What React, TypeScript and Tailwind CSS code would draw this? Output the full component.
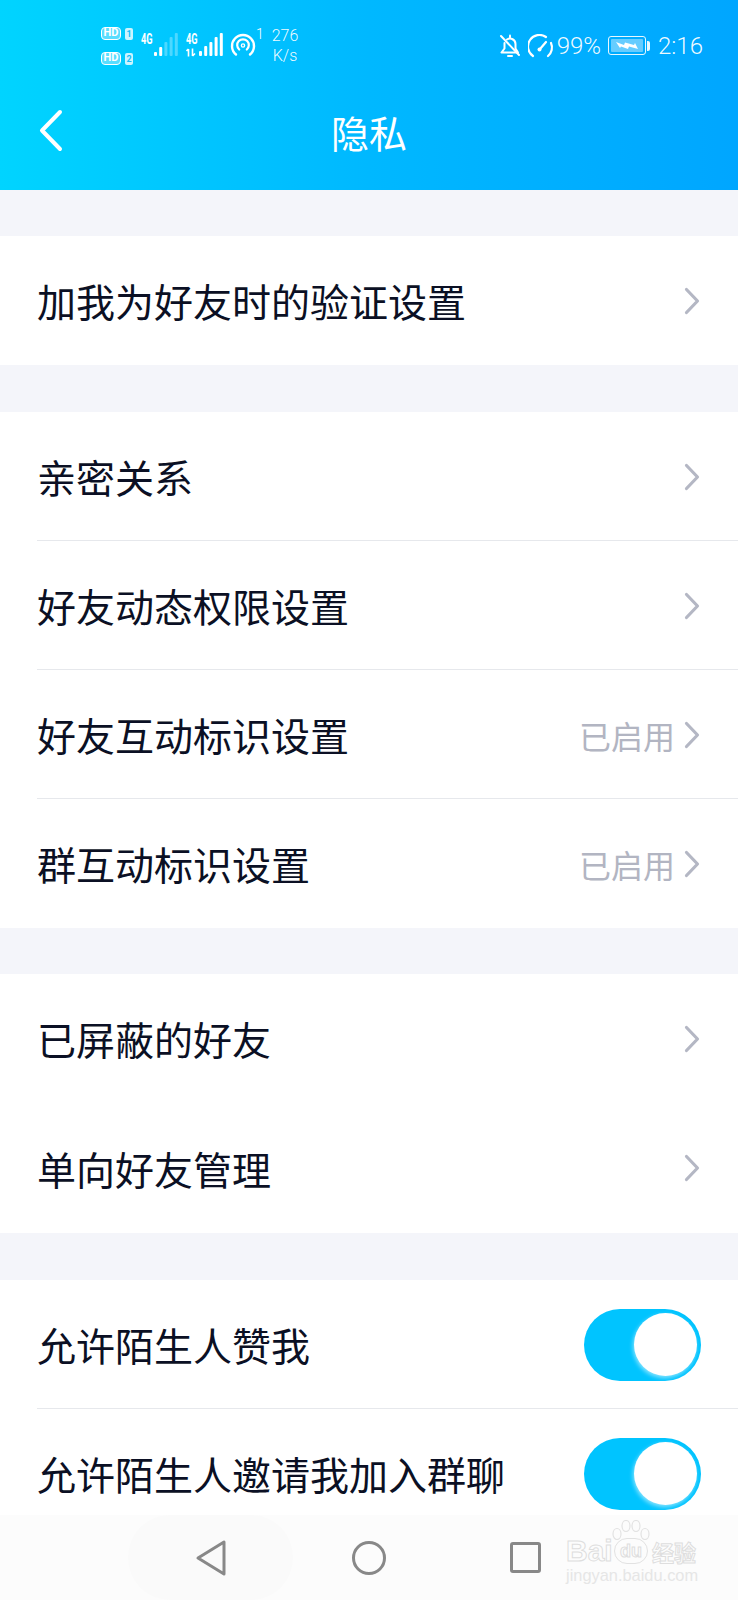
import React from "react";

const font = { fontFamily: '"Noto Sans CJK SC", "Noto Sans", sans-serif' };

function Chevron() {
  return (
    <svg width="16" height="28" viewBox="0 0 16 28" fill="none" className="block mr-[1px]">
      <path d="M2.5 2.5 L13.5 14 L2.5 25.5" stroke="#b4b7c4" strokeWidth="3.2" strokeLinecap="round" strokeLinejoin="round" />
    </svg>
  );
}

function Toggle() {
  return (
    <div className="w-[117px] h-[72px] rounded-full bg-[#00c4ff] flex items-center justify-end pr-[4px] shrink-0">
      <div className="w-[63px] h-[63px] rounded-full bg-white shadow-[-1px_2px_4px_rgba(255,255,255,0.55)]" />
    </div>
  );
}

function Row({ label, value, toggle, divider, tall }: { label: string; value?: string; toggle?: boolean; divider?: boolean; tall?: boolean }) {
  return (
    <div className={tall ? "relative h-[130px] flex items-center px-[37px] bg-white" : "relative h-[129px] flex items-center px-[37px] bg-white"}>
      <span className="flex-1 text-[39px] leading-none text-[#0b1024] whitespace-nowrap">{label}</span>
      {value && <span className="text-[32px] leading-none text-[#b2b5c2] mr-[9px]">{value}</span>}
      {toggle ? <Toggle /> : <Chevron />}
      {divider && <div className="absolute left-[37px] right-0 bottom-0 h-px bg-[#e6e8ec]" />}
    </div>
  );
}

function Bars({ bright, first }: { bright: number; first?: boolean }) {
  const hs = first ? [4, 9, 14, 19, 23] : [5, 10, 14, 19, 23];
  return (
    <svg width="24" height="23" viewBox="0 0 24 23" className="block">
      {hs.map((h, i) => (
        <rect key={i} x={i * 5.2} y={23 - h} width="3" height={h} rx="1" fill="#fff" opacity={i < bright ? 1 : 0.3} />
      ))}
    </svg>
  );
}

function Hd({ n }: { n: string }) {
  return (
    <div className="flex items-center gap-[4px] text-white font-bold">
      <div className="w-[20px] h-[13px] rounded-[4px] border-[1.5px] border-white bg-white/35 text-[11px] leading-[10px] text-center">HD</div>
      <div className="w-[8px] h-[12px] rounded-[2px] bg-white/80 text-[#14bdfa] text-[9px] leading-[12px] text-center">{n}</div>
    </div>
  );
}

function FourG() {
  return (
    <span className="block w-[13px] h-[11px] text-[14px] leading-[11px] font-bold origin-left scale-x-[0.66] whitespace-nowrap">4G</span>
  );
}

function StatusBar() {
  return (
    <div className="h-[80px] flex pl-[101px] pr-[35px] text-white" style={{ fontFamily: '"Roboto", sans-serif' }}>
      <div className="flex flex-col gap-[12px] mt-[27px] w-[40px]">
        <Hd n="1" />
        <Hd n="2" />
      </div>
      <div className="mt-[34px] w-[13px]"><FourG /></div>
      <div className="mt-[33px]"><Bars bright={2} first /></div>
      <div className="mt-[34px] ml-[8px] w-[13px]">
        <FourG />
        <svg width="13" height="9" viewBox="0 0 13 9" fill="none" className="block mt-[3px]">
          <path d="M2.5 8.5 V1 M0.5 3 L2.5 1 M6.5 0.5 V8 M6.5 8 L9 5.5" stroke="#fff" strokeWidth="1.6" />
        </svg>
      </div>
      <div className="mt-[33px]"><Bars bright={5} /></div>
      <svg width="26" height="24" viewBox="0 0 26 24" fill="none" className="mt-[33px] ml-[7px] shrink-0">
        <path d="M6 21.5 A11 11 0 1 1 20 21.5" stroke="#fff" strokeWidth="2.4" strokeLinecap="round" />
        <path d="M9.2 16.5 A5.8 5.8 0 1 1 16.8 16.5" stroke="#fff" strokeWidth="2.2" strokeLinecap="round" />
        <circle cx="13" cy="12.5" r="1.6" stroke="#fff" strokeWidth="1.4" />
      </svg>
      <span className="text-[14px] leading-none mt-[27px] w-[16px] font-light">1</span>
      <div className="flex flex-col items-center text-[16px] leading-[20px] text-white/95 w-[26px] mt-[26px] font-light">
        <span>276</span>
        <span>K/s</span>
      </div>
      <div className="flex-1" />
      <div className="flex items-start font-light">
        <svg width="22" height="24" viewBox="0 0 22 24" fill="none" className="mt-[34px]">
          <path d="M2.5 18.5 H19 L16.5 14.5 V10 A5.5 5.5 0 0 0 8 5.5 M5.5 9 V14.5 L2.5 18.5" stroke="#fff" strokeWidth="2" strokeLinejoin="round" strokeLinecap="round" />
          <path d="M2 2 L20 21" stroke="#fff" strokeWidth="2" strokeLinecap="round" />
          <path d="M9 22 H13" stroke="#fff" strokeWidth="2" strokeLinecap="round" />
          <path d="M11 1.5 V3.5" stroke="#fff" strokeWidth="2" strokeLinecap="round" />
        </svg>
        <svg width="26" height="24" viewBox="0 0 26 24" fill="none" className="ml-[7px] mt-[34px]">
          <path d="M5 22 A11 11 0 0 1 18 3" stroke="#fff" strokeWidth="2.2" strokeLinecap="round" />
          <path d="M23 9 A11 11 0 0 1 20 22" stroke="#fff" strokeWidth="2.2" strokeLinecap="round" />
          <path d="M12 15 L18 8" stroke="#fff" strokeWidth="2.2" strokeLinecap="round" />
          <circle cx="11.5" cy="15.5" r="2" fill="#fff" />
        </svg>
        <span className="text-[24px] leading-none ml-[3px] mt-[34px] text-white/95">99%</span>
        <div className="ml-[7px] mt-[36px] flex items-center">
          <div className="w-[38px] h-[19px] rounded-[3px] border-[1.5px] border-white/90 p-[2px]">
            <div className="w-full h-full bg-white/40 rounded-[1px] flex items-center justify-center">
              <svg width="24" height="9" viewBox="0 0 24 9"><path d="M1 1 L9 4 L10 1.5 L19 4 L20 2 L23 8 L14 5.5 L13 8 L6 5.5 L5 7 Z" fill="#fff" /></svg>
            </div>
          </div>
          <div className="w-[3px] h-[10px] bg-white/90 rounded-r-[2px] ml-[1px]" />
        </div>
        <span className="text-[24px] leading-none ml-[8px] mt-[34px] text-white/95">2:16</span>
      </div>
    </div>
  );
}

function Watermark() {
  return (
    <div className="absolute left-[566px] top-[1520px] w-[134px] h-[70px] pointer-events-none">
      <svg width="40" height="28" viewBox="0 0 40 28" fill="none" stroke="#e2e2e2" strokeWidth="1.2" className="absolute left-[45px] top-0">
        <ellipse cx="6" cy="14" rx="4" ry="5.5" />
        <ellipse cx="15" cy="6" rx="4" ry="5.5" />
        <ellipse cx="25" cy="6" rx="4" ry="5.5" />
        <ellipse cx="34" cy="14" rx="4" ry="5.5" />
      </svg>
      <div className="absolute left-0 top-[16px] flex items-center whitespace-nowrap" style={{ fontFamily: '"Liberation Sans", sans-serif' }}>
        <span className="text-[30px] leading-none font-bold w-[47px] mr-[1px] text-transparent [-webkit-text-stroke:1px_#dedede]">Bai</span>
        <span className="w-[34px] h-[26px] rounded-full border border-[#e2e2e2] text-[18px] leading-[24px] text-center font-bold text-transparent [-webkit-text-stroke:1px_#dedede]">du</span>
        <span className="text-[22px] leading-none font-bold ml-[4px] text-transparent [-webkit-text-stroke:1px_#dedede]" style={font}>经验</span>
      </div>
      <div className="absolute left-0 top-[47px] text-[16.4px] leading-none whitespace-nowrap text-[#e6e6e6]" style={{ fontFamily: '"Liberation Sans", sans-serif' }}>
        jingyan.baidu.com
      </div>
    </div>
  );
}

function NavBar() {
  return (
    <div className="absolute left-0 right-0 bottom-0 h-[85px] bg-[#fcfcfc]">
      <div className="absolute left-[128px] top-0 w-[165px] h-[85px] rounded-[42px] bg-[#fafafa]" />
      <svg width="32" height="38" viewBox="0 0 32 38" fill="none" className="absolute left-[195px] top-[24px]">
        <path d="M3 19 L29 3 V35 Z" stroke="#888888" strokeWidth="3" strokeLinejoin="round" />
      </svg>
      <div className="absolute left-[352px] top-[26px] w-[34px] h-[34px] rounded-full border-[3px] border-[#888888]" />
      <div className="absolute left-[510px] top-[27px] w-[31px] h-[31px] rounded-[3px] border-[3px] border-[#888888]" />
    </div>
  );
}

export default function App() {
  return (
    <div className="relative w-[738px] h-[1600px] overflow-hidden bg-[#f4f5fa]" style={font}>
      <div className="h-[190px] bg-gradient-to-r from-[#00d4ff] via-[#00b8ff] to-[#00a6ff]">
        <StatusBar />
        <div className="relative h-[110px] flex justify-center pt-[29px]">
          <svg width="26" height="44" viewBox="0 0 26 44" fill="none" className="absolute left-[38px] top-[29px]">
            <path d="M22 3 L4 21.5 L22 40" stroke="#fff" strokeWidth="4" strokeLinecap="round" strokeLinejoin="round" />
          </svg>
          <span className="text-[38px] leading-[46px] text-white">隐私</span>
        </div>
      </div>
      <div className="h-[46px]" />
      <Row label="加我为好友时的验证设置" />
      <div className="h-[47px]" />
      <Row label="亲密关系" divider />
      <Row label="好友动态权限设置" divider />
      <Row label="好友互动标识设置" value="已启用" divider />
      <Row label="群互动标识设置" value="已启用" />
      <div className="h-[46px]" />
      <Row label="已屏蔽的好友" />
      <Row label="单向好友管理" tall />
      <div className="h-[47px]" />
      <Row label="允许陌生人赞我" toggle divider />
      <Row label="允许陌生人邀请我加入群聊" toggle />
      <NavBar />
      <Watermark />
    </div>
  );
}
